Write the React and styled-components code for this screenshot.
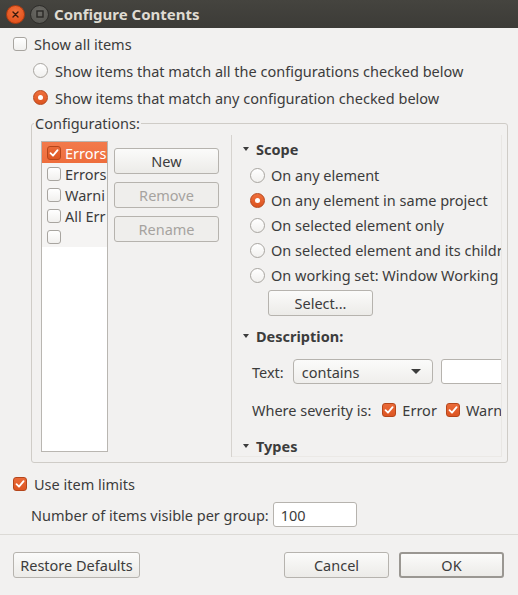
import React from 'react'
import styled, { createGlobalStyle } from 'styled-components'

const Global = createGlobalStyle`
  body {
    margin: 0;
    background: #f2f1f0;
    font-family: "Noto Sans", "DejaVu Sans", sans-serif;
    font-size: 14.5px;
    color: #3c3c3c;
  }
`

const Window = styled.div`
  width: 518px;
  height: 595px;
  background: #f2f1f0;
  display: flex;
  flex-direction: column;
  overflow: hidden;
`

const TitleBar = styled.div`
  height: 28px;
  background: linear-gradient(#45443f, #3c3b37);
  display: flex;
  align-items: center;
  padding-left: 6px;
  gap: 5px;
`

const WinButton = styled.span`
  width: 17px;
  height: 17px;
  border-radius: 50%;
  display: flex;
  align-items: center;
  justify-content: center;
  background: ${p => p.close ? 'radial-gradient(circle at 50% 35%, #f3733d, #dd4814)' : 'radial-gradient(circle at 50% 35%, #6b6a65, #55544f)'};
  border: 1px solid ${p => p.close ? '#b23c10' : '#2e2d2a'};
`

const Title = styled.span`
  font-weight: bold;
  font-size: 15px;
  color: #dfdbd2;
`

const Body = styled.div`
  padding: 2px 10px 0 13px;
  display: flex;
  flex-direction: column;
`

const Row = styled.label`
  height: ${p => p.h || 27}px;
  display: flex;
  align-items: center;
  gap: ${p => p.gap || 7}px;
  margin-left: ${p => p.indent || 0}px;
  margin-top: ${p => p.mt || 0}px;
  white-space: nowrap;
  color: #3c3c3c;
`

const Box = styled.span`
  flex: none;
  width: 14px;
  height: 14px;
  border-radius: 3px;
  box-sizing: border-box;
  display: flex;
  align-items: center;
  justify-content: center;
  border: 1px solid ${p => p.checked ? '#b5461b' : '#a8a5a0'};
  background: ${p => p.checked ? 'linear-gradient(#ea6a38, #dd5522)' : 'linear-gradient(#ffffff, #f1f0ee)'};
`

const Radio = styled.span`
  flex: none;
  width: 15px;
  height: 15px;
  border-radius: 50%;
  box-sizing: border-box;
  display: flex;
  align-items: center;
  justify-content: center;
  border: 1px solid ${p => p.checked ? '#b5461b' : '#a8a5a0'};
  background: ${p => p.checked ? 'linear-gradient(#ef6f3c, #dc5420)' : 'linear-gradient(#ffffff, #f1f0ee)'};
  &::after {
    content: '';
    display: ${p => p.checked ? 'block' : 'none'};
    width: 5px;
    height: 5px;
    border-radius: 50%;
    background: #fff;
  }
`

const Check = ({ checked }) => (
  <Box checked={checked}>
    {checked && (
      <svg width="10" height="10" viewBox="0 0 10 10">
        <path d="M1.5 5.2 L4 7.7 L8.6 2.2" fill="none" stroke="#fff" strokeWidth="1.8" strokeLinecap="round" strokeLinejoin="round" />
      </svg>
    )}
  </Box>
)

const Group = styled.div`
  position: relative;
  margin: 12px 0 0 18px;
  width: 477px;
  height: 340px;
  box-sizing: border-box;
  border: 1px solid #cfccc7;
  border-radius: 3px;
  padding: 11px 0 0 9px;
`

const Legend = styled.span`
  position: absolute;
  top: -10px;
  left: 2px;
  padding: 0 1px;
  background: #f2f1f0;
  line-height: 18px;
`

const Sash = styled.div`
  display: flex;
  height: 322px;
`

const LeftPane = styled.div`
  width: 190px;
  display: flex;
  gap: 6px;
  padding-top: 6px;
`

const List = styled.div`
  width: 67px;
  height: 311px;
  box-sizing: border-box;
  border: 1px solid #b9b6b1;
  background: #fff;
  overflow: hidden;
`

const ListRow = styled.div`
  height: 21px;
  display: flex;
  align-items: center;
  gap: 4px;
  padding-left: 5px;
  white-space: nowrap;
  background: ${p => p.selected ? 'linear-gradient(#f27a4b, #ee6d3c)' : '#f5f4f3'};
  color: ${p => p.selected ? '#fff' : '#3c3c3c'};
`

const ButtonCol = styled.div`
  display: flex;
  flex-direction: column;
  gap: 8px;
  padding-top: 7px;
`

const Button = styled.button`
  width: ${p => p.w || 105}px;
  height: 26px;
  box-sizing: border-box;
  font: inherit;
  font-size: 14.5px;
  border-radius: 3px;
  border: ${p => p.def ? '2px solid #9a9792' : '1px solid #b6b3ae'};
  background: ${p => p.disabled ? '#efeeec' : 'linear-gradient(#fbfbfa, #ecebe8)'};
  color: ${p => p.disabled ? '#a6a39f' : '#3c3c3c'};
  padding: 0;
  margin-left: ${p => p.ml || 0}px;
  margin-top: ${p => p.mt || 0}px;
`

const Divider = styled.div`
  width: 1px;
  background: #d6d3cf;
`

const RightPane = styled.div`
  width: 270px;
  overflow: hidden;
  padding-left: 11px;
  display: flex;
  flex-direction: column;
  border-right: 1px solid #e9e7e4;
  border-bottom: 1px solid #ebe9e6;
  box-sizing: border-box;
`

const Section = styled.div`
  height: 24px;
  display: flex;
  align-items: center;
  gap: 7px;
  font-weight: bold;
  margin-top: ${p => p.mt || 0}px;
`

const Triangle = styled.span`
  flex: none;
  width: 0;
  height: 0;
  border-left: ${p => p.big ? 5 : 3.5}px solid transparent;
  border-right: ${p => p.big ? 5 : 3.5}px solid transparent;
  border-top: ${p => p.big ? 5 : 4}px solid #3c3c3c;
`

const Indent = styled.div`
  padding-left: ${p => p.pl || 9}px;
  display: flex;
  flex-direction: column;
`

const FieldRow = styled.div`
  display: flex;
  align-items: center;
  white-space: nowrap;
  height: ${p => p.h || 25}px;
  margin-top: ${p => p.mt || 0}px;
  padding-left: ${p => p.pl || 0}px;
`

const Combo = styled.div`
  width: 140px;
  height: 25px;
  box-sizing: border-box;
  border: 1px solid #b6b3ae;
  border-radius: 4px;
  background: linear-gradient(#fbfbfa, #efeeec);
  display: flex;
  align-items: center;
  justify-content: space-between;
  padding: 0 11px 0 8px;
  margin-left: 9px;
  flex: none;
`

const Input = styled.div`
  width: ${p => p.w}px;
  height: 25px;
  box-sizing: border-box;
  border: 1px solid #b6b3ae;
  border-radius: 3px;
  background: #fff;
  display: flex;
  align-items: center;
  padding-left: 7px;
  margin-left: ${p => p.ml || 0}px;
  flex: none;
`

const Severity = styled(Row)`
  margin-left: ${p => p.ml}px;
`

const Separator = styled.div`
  height: 1px;
  background: #dcdad6;
  margin-top: 7px;
`

const ButtonBar = styled.div`
  display: flex;
  align-items: center;
  padding: 0 14px 0 13px;
  margin-top: 17px;
  gap: 10px;
`

const Spacer = styled.div`
  flex: 1;
`

const configs = [
  { name: 'Errors', checked: true, selected: true },
  { name: 'Errors', checked: false },
  { name: 'Warni', checked: false },
  { name: 'All Err', checked: false },
  { name: '', checked: false },
]

const scopes = [
  'On any element',
  'On any element in same project',
  'On selected element only',
  'On selected element and its childr',
  'On working set:  Window Working',
]

export default function App() {
  return (
    <Window>
      <Global />
      <TitleBar>
        <WinButton close>
          <svg width="7" height="7" viewBox="0 0 7 7">
            <path d="M1 1 L6 6 M6 1 L1 6" stroke="#3a1a0c" strokeWidth="1.4" strokeLinecap="round" />
          </svg>
        </WinButton>
        <WinButton>
          <svg width="8" height="8" viewBox="0 0 8 8">
            <rect x="1" y="1" width="6" height="6" fill="none" stroke="#2a2926" strokeWidth="1.4" />
          </svg>
        </WinButton>
        <Title>Configure Contents</Title>
      </TitleBar>
      <Body>
        <Row>
          <Check checked={false} />
          Show all items
        </Row>
        <Row indent={20}>
          <Radio />
          Show items that match all the configurations checked below
        </Row>
        <Row indent={20}>
          <Radio checked />
          Show items that match any configuration checked below
        </Row>
        <Group>
          <Legend>Configurations:</Legend>
          <Sash>
            <LeftPane>
              <List>
                {configs.map((c, i) => (
                  <ListRow key={i} selected={c.selected}>
                    <Check checked={c.checked} />
                    {c.name}
                  </ListRow>
                ))}
              </List>
              <ButtonCol>
                <Button>New</Button>
                <Button disabled>Remove</Button>
                <Button disabled>Rename</Button>
              </ButtonCol>
            </LeftPane>
            <Divider />
            <RightPane>
              <Section mt={4}>
                <Triangle />
                Scope
              </Section>
              <Indent pl={7}>
                {scopes.map((s, i) => (
                  <Row key={i} h={25} gap={6} mt={i === 0 ? 3 : 0}>
                    <Radio checked={i === 1} />
                    {s}
                  </Row>
                ))}
                <Button w={105} ml={18} mt={2}>Select...</Button>
              </Indent>
              <Section mt={10}>
                <Triangle />
                Description:
              </Section>
              <Indent>
                <FieldRow mt={13}>
                  Text:
                  <Combo>
                    contains
                    <Triangle big />
                  </Combo>
                  <Input w={80} ml={8} />
                </FieldRow>
                <FieldRow mt={14} h={24}>
                  Where severity is:
                  <Severity h={24} gap={6} ml={11}>
                    <Check checked />
                    Error
                  </Severity>
                  <Severity h={24} gap={6} ml={9}>
                    <Check checked />
                    Warn
                  </Severity>
                </FieldRow>
              </Indent>
              <Section mt={13}>
                <Triangle />
                Types
              </Section>
            </RightPane>
          </Sash>
        </Group>
        <Row mt={7}>
          <Check checked />
          Use item limits
        </Row>
        <FieldRow mt={5} pl={18}>
          Number of items visible per group:
          <Input w={84} ml={4}>100</Input>
        </FieldRow>
      </Body>
      <Separator />
      <ButtonBar>
        <Button w={127}>Restore Defaults</Button>
        <Spacer />
        <Button>Cancel</Button>
        <Button def>OK</Button>
      </ButtonBar>
    </Window>
  )
}
